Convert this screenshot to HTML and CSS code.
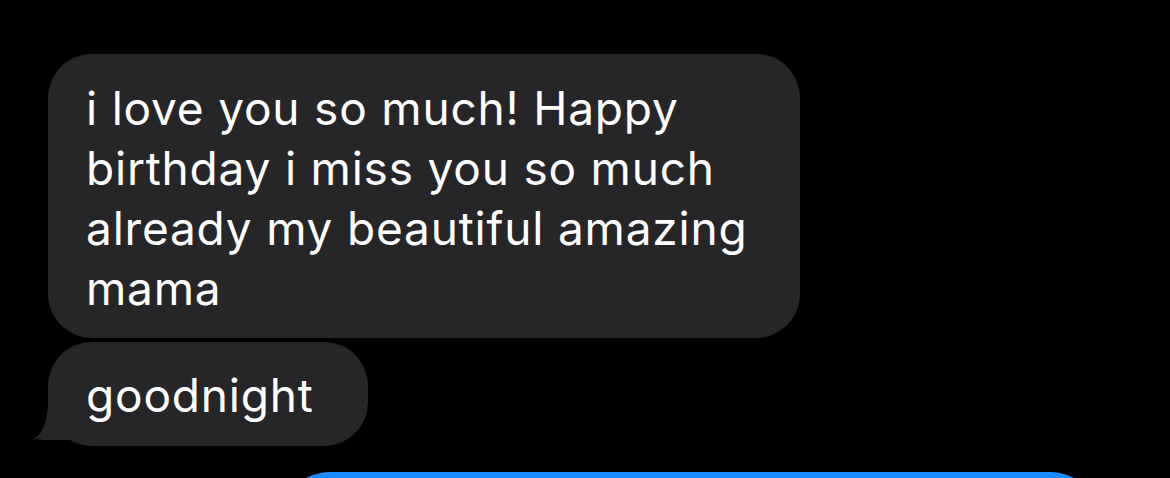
FILE: index.html
```html
<!DOCTYPE html>
<html>
    <head>
        <meta charset="utf-8">
        <title>Messages</title>
        <link rel="stylesheet" href="styles.css">
    </head>
    <body>
        <div class="thread">
            <div class="bubble received wide">
                i love you so much! Happy<br>
                birthday i miss you so much<br>
                already my beautiful amazing<br>
                mama
            </div>
            <div class="bubble received last">
                goodnight
                <svg class="tail" width="54" height="40" viewBox="0 0 54 40">
                    <path d="M16 0 L16 34 C13 30 6 33 0 34 C6 31 14 25 16 0 Z M16 0 L54 0 L54 34 L16 34 Z" fill="#262629"/>
                    <path d="M0 34 C8 35 14 30 35 22 L51 34 Z" fill="#262629"/>
                </svg>
            </div>
            <div class="bubble sent">&nbsp;</div>
        </div>
    </body>
</html>
```

FILE: styles.css
```css
*{
    margin: 0px;
    padding: 0px;
    box-sizing: border-box;
}
html, body{
    height: 100%;
}
body{
    background-color: #000;
    overflow: hidden;
    font-family: "Inter", "Liberation Sans", sans-serif;
}
.thread{
    display: flex;
    flex-direction: column;
    align-items: flex-start;
    gap: 4px;
    padding: 54px 70px 0px 48px;
}
.bubble{
    font-size: 46px;
    letter-spacing: 0.8px;
    line-height: 60px;
    color: #fff;
    border-radius: 44px;
    position: relative;
    white-space: nowrap;
}
.received{
    background-color: #262629;
    padding: 23px 54px 21px 38px;
}
.wide{
    width: 752px;
    padding: 24px 40px 20px 38px;
}
.tail{
    position: absolute;
    left: -16px;
    bottom: 0px;
    display: block;
}
.sent{
    align-self: flex-end;
    width: 820px;
    margin-top: 22px;
    height: 120px;
    background-color: #1b8afe;
    border-radius: 50px;
}
```
